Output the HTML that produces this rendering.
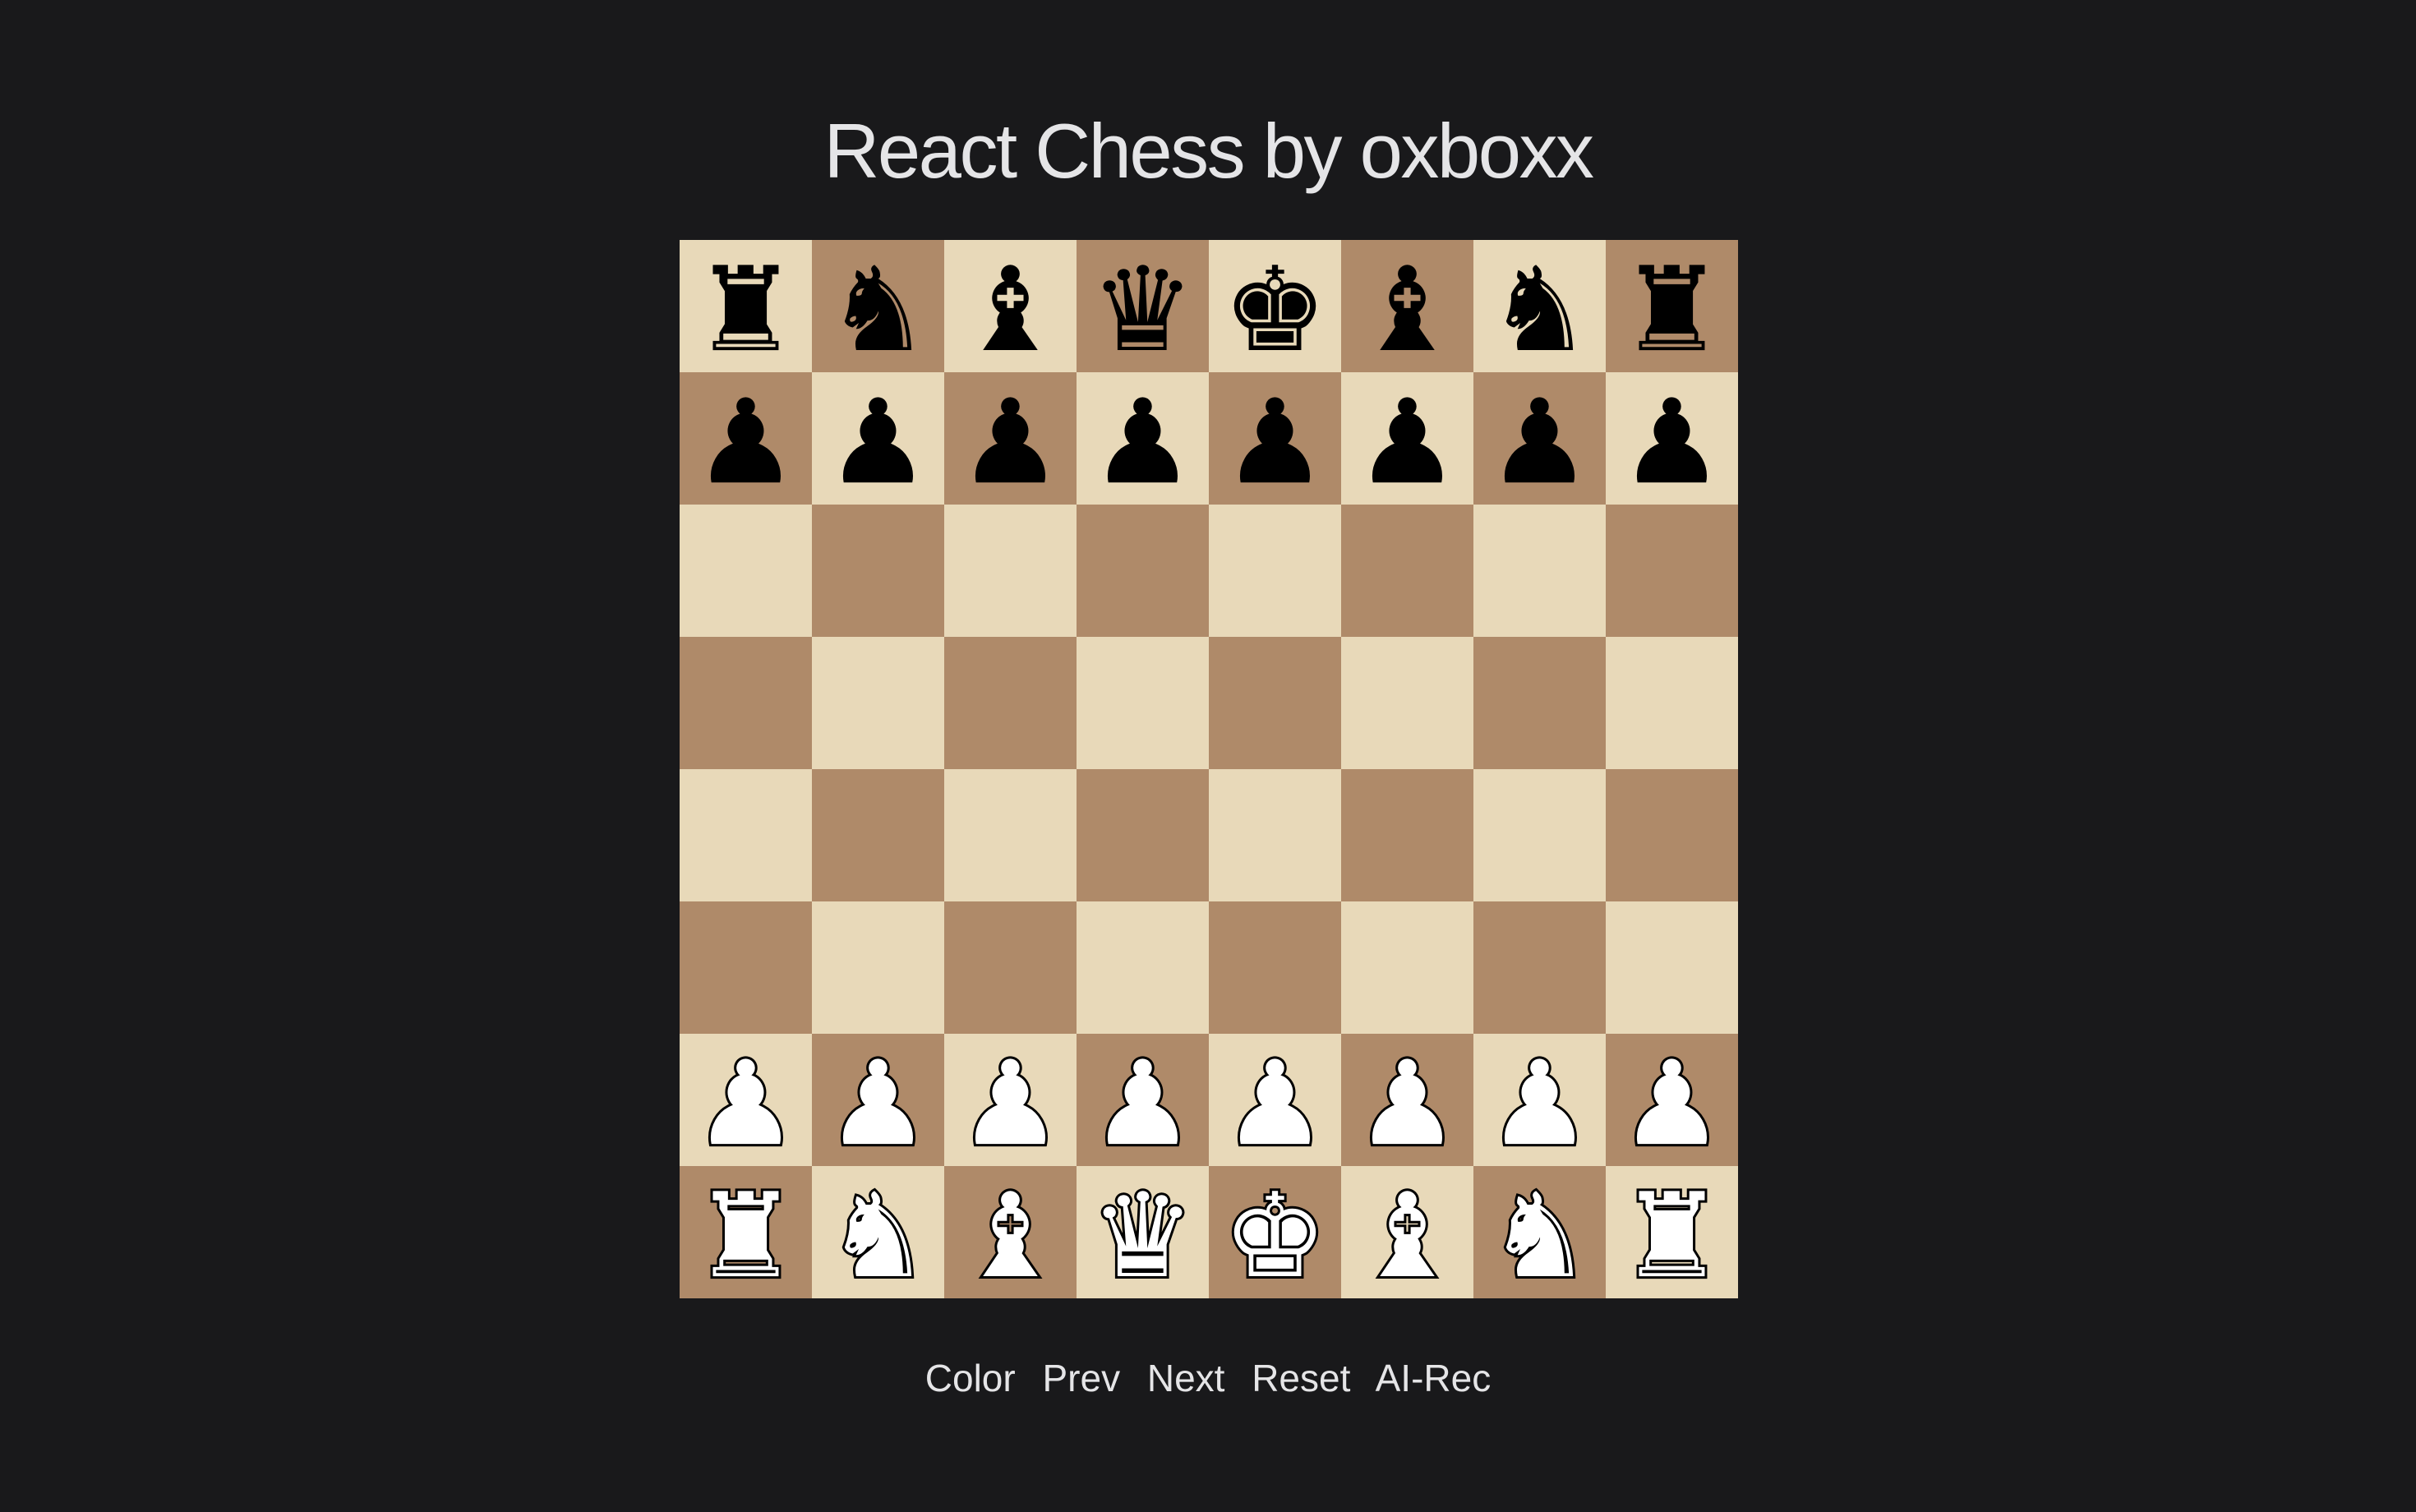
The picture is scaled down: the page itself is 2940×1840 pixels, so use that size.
<!DOCTYPE html>
<html><head><meta charset="utf-8"><style>
html,body{margin:0;padding:0;background:#19191b;width:2940px;height:1840px;overflow:hidden}
h1{position:absolute;left:0;width:2940px;top:130px;margin:0;text-align:center;font:400 94px "Liberation Sans",sans-serif;color:#e5e5e7;letter-spacing:-2.5px}
#b{position:absolute;left:827px;top:292px;width:1288px;height:1288px;display:grid;grid-template-columns:repeat(8,161px);grid-template-rows:repeat(8,161px)}
#b div{display:flex;align-items:center;justify-content:center;font:142px "DejaVu Sans",sans-serif;color:#000;line-height:1;padding-top:10px;box-sizing:border-box}
#b div.w{color:#fff;-webkit-text-stroke:6px #000;paint-order:stroke fill}
.l{background:#e8d9b9}.d{background:#af8a69}
#btn{position:absolute;left:0;width:2940px;top:1650px;text-align:center;font:46px "Liberation Sans",sans-serif;color:#e5e5e7;word-spacing:20px}
</style></head><body>
<h1>React Chess by oxboxx</h1>
<div id="b">
<div class="l">♜</div><div class="d">♞</div><div class="l">♝</div><div class="d">♛</div><div class="l">♚</div><div class="d">♝</div><div class="l">♞</div><div class="d">♜</div>
<div class="d">♟</div><div class="l">♟</div><div class="d">♟</div><div class="l">♟</div><div class="d">♟</div><div class="l">♟</div><div class="d">♟</div><div class="l">♟</div>
<div class="l"></div><div class="d"></div><div class="l"></div><div class="d"></div><div class="l"></div><div class="d"></div><div class="l"></div><div class="d"></div>
<div class="d"></div><div class="l"></div><div class="d"></div><div class="l"></div><div class="d"></div><div class="l"></div><div class="d"></div><div class="l"></div>
<div class="l"></div><div class="d"></div><div class="l"></div><div class="d"></div><div class="l"></div><div class="d"></div><div class="l"></div><div class="d"></div>
<div class="d"></div><div class="l"></div><div class="d"></div><div class="l"></div><div class="d"></div><div class="l"></div><div class="d"></div><div class="l"></div>
<div class="l w">♟</div><div class="d w">♟</div><div class="l w">♟</div><div class="d w">♟</div><div class="l w">♟</div><div class="d w">♟</div><div class="l w">♟</div><div class="d w">♟</div>
<div class="d w">♜</div><div class="l w">♞</div><div class="d w">♝</div><div class="l w">♛</div><div class="d w">♚</div><div class="l w">♝</div><div class="d w">♞</div><div class="l w">♜</div>
</div>
<div id="btn">Color Prev Next Reset AI-Rec</div>
</body></html>
